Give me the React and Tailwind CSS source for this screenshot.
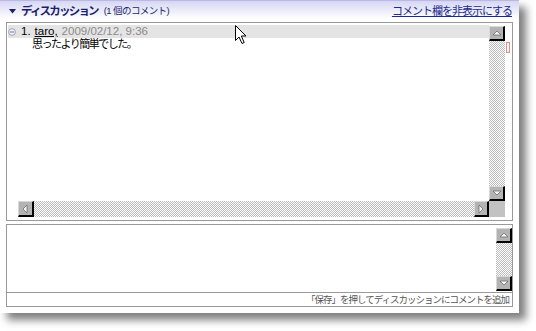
import React from 'react'

function Track({ className = '' }) {
  return (
    <div className={`overflow-hidden ${className}`}>
      <svg width="100%" height="100%">
        <defs>
          <pattern id="dither" width="2" height="2" patternUnits="userSpaceOnUse">
            <rect width="2" height="2" fill="#ffffff" />
            <rect x="0" y="0" width="1" height="1" fill="#bcbcbc" />
            <rect x="1" y="1" width="1" height="1" fill="#bcbcbc" />
          </pattern>
        </defs>
        <rect width="100%" height="100%" fill="url(#dither)" />
      </svg>
    </div>
  )
}

function Arrow({ dir }) {
  const pts = {
    up: '2,7 6,3 10,7',
    down: '2,3 6,7 10,3',
    left: '7,1 3,5 7,9',
    right: '4,1 8,5 4,9'
  }
  return (
    <svg width="12" height="10" viewBox="0 0 12 10">
      <polygon points={pts[dir]} fill="#f4f4f4" stroke="#6e6e6e" strokeWidth="0.8" />
    </svg>
  )
}

function ScrollButton({ dir, className = '' }) {
  return (
    <div
      className={`flex items-center justify-center bg-[#b3b3b3] border-t border-l border-t-[#d8d8d8] border-l-[#d8d8d8] border-b-2 border-r-2 border-b-black border-r-black ${className}`}
    >
      <Arrow dir={dir} />
    </div>
  )
}

function Cursor() {
  return (
    <svg className="absolute left-[234px] top-[24px]" width="14" height="21" viewBox="0 0 14 21">
      <path
        d="M1.5 1.5 L1.5 16.5 L5 13 L8 19.5 L10.2 18.5 L7.3 12 L12 12 Z"
        fill="#ffffff"
        stroke="#000000"
        strokeWidth="1"
      />
    </svg>
  )
}

function CollapseIcon() {
  return (
    <svg width="8" height="8" viewBox="0 0 8 8" className="mt-[1px]">
      <circle cx="4" cy="4" r="3.4" fill="#eef1f8" stroke="#8e9bb6" strokeWidth="0.9" />
      <line x1="2" y1="4" x2="6" y2="4" stroke="#6d7a96" strokeWidth="1" />
    </svg>
  )
}

export default function App() {
  return (
    <div className="w-[536px] h-[331px] bg-white overflow-hidden font-['Liberation_Sans','Noto_Sans_CJK_JP',sans-serif]">
      <div className="relative w-[519px] h-[313px] bg-white shadow-[7px_7px_8px_rgba(0,0,0,0.5)] flex flex-col">
        {/* header */}
        <div className="h-[22px] flex items-center justify-between pl-[9px] pr-[7px] border-t border-[#b9b9e4] bg-[linear-gradient(#d6d6f4,#ffffff_85%)]">
          <div className="flex items-center">
            <svg width="7" height="5" viewBox="0 0 7 5" className="mr-[5px]">
              <polygon points="0,0 7,0 3.5,4.5" fill="#1a1f6e" />
            </svg>
            <span className="text-[11.5px] font-bold tracking-[-1.8px] text-[#1a1f6e]">ディスカッション</span>
            <span className="ml-[6px] text-[9.5px] tracking-[-0.6px] text-[#1a1f6e]">(1 個のコメント)</span>
          </div>
          <a href="#" className="text-[11px] tracking-[-1px] text-[#1b2a8c] underline">
            コメント欄を非表示にする
          </a>
        </div>

        {/* discussion list */}
        <div className="mx-[6px] h-[199px] border border-[#9a9a9a] flex">
          <div className="flex flex-col pt-[2px] pl-[1px]">
            <div className="flex h-[176px]">
              <div className="w-[481px] flex flex-col">
                <div className="h-[13px] bg-[#e4e4e4] flex items-center gap-[4px] text-[11.5px] leading-none">
                  <CollapseIcon />
                  <span className="ml-[1px] text-black">1.</span>
                  <span className="text-black underline">taro,</span>
                  <span className="text-[#8a8a8a]">2009/02/12, 9:36</span>
                </div>
                <div className="pl-[24px] text-[11px] tracking-[-1.5px] leading-[13px] text-black">
                  思ったより簡単でした。
                </div>
              </div>
              <div className="w-[16px] flex flex-col mt-[1px]">
                <ScrollButton dir="up" className="h-[15px]" />
                <Track className="flex-1" />
                <ScrollButton dir="down" className="h-[15px]" />
              </div>
            </div>
            <div className="flex h-[16px]">
              <div className="w-[10px]" />
              <ScrollButton dir="left" className="w-[16px]" />
              <Track className="flex-1" />
              <ScrollButton dir="right" className="w-[15px]" />
              <div className="w-[16px] bg-[#c2c2c2]" />
            </div>
          </div>
          <div className="pl-[1px] pt-[19px]">
            <div className="w-[4px] h-[11px] border border-[#f08a8a] bg-white" />
          </div>
        </div>

        {/* new comment */}
        <div className="mx-[6px] mt-[3px] h-[83px] border border-[#9a9a9a] flex flex-col">
          <div className="flex h-[67px]">
            <div className="flex-1" />
            <div className="w-[16px] flex flex-col pt-[3px] pb-[1px]">
              <ScrollButton dir="up" className="h-[15px]" />
              <Track className="flex-1" />
              <ScrollButton dir="down" className="h-[15px]" />
            </div>
          </div>
          <div className="flex-1 border-t border-[#9a9a9a] flex items-center justify-end pr-[3px] text-[9.5px] tracking-[-1px] text-[#555555]">
            「保存」を押してディスカッションにコメントを追加
          </div>
        </div>

        <Cursor />
      </div>
    </div>
  )
}
